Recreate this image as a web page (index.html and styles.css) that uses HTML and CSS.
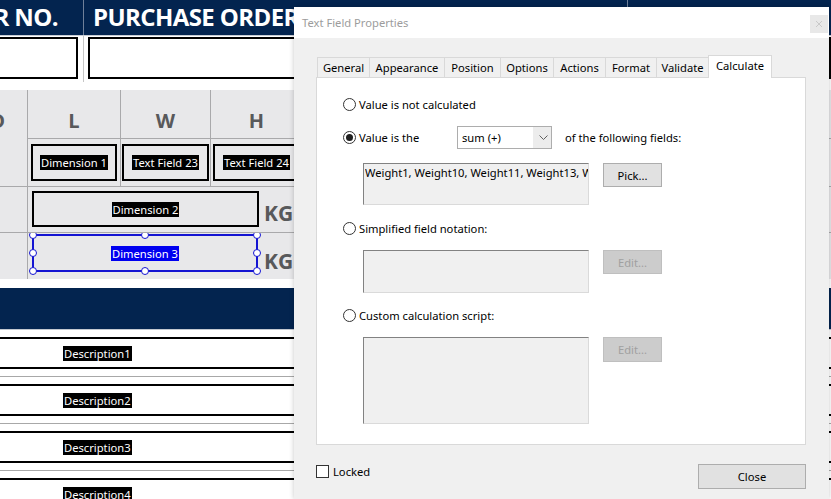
FILE: index.html
```html
<!DOCTYPE html>
<html>
<head>
<meta charset="utf-8">
<title>Text Field Properties</title>
<link rel="stylesheet" href="styles.css">
</head>
<body>
<div class="doc">
  <div class="hdr">
    <div class="hcell hc1"><span>ORDER NO.</span></div>
    <div class="hcell hc2"><span class="htxt">PURCHASE ORDER NO.</span></div>
    <div class="hcell hc3"><span>DATE</span></div>
  </div>
  <div class="inrow">
    <div class="icell ic1"><div class="ibox ib1"></div></div>
    <div class="icell ic2"><div class="ibox"></div></div>
    <div class="icell ic3"><div class="ibox"></div></div>
  </div>
  <div class="gap1"></div>
  <div class="grid">
    <div class="g hd c0"><span class="clipd">D</span></div>
    <div class="g hd">L</div>
    <div class="g hd">W</div>
    <div class="g hd">H</div>
    <div class="g"></div>
    <div class="g fc"><div class="fbox w86"><span class="flabel">Dimension 1</span></div></div>
    <div class="g fc"><div class="fbox w87"><span class="flabel">Text Field 23</span></div></div>
    <div class="g fc"><div class="fbox w87"><span class="flabel">Text Field 24</span></div></div>
    <div class="g"></div>
    <div class="g"></div>
    <div class="g span s2">
      <div class="fbox wide b2"><span class="flabel">Dimension 2</span></div>
      <span class="kg kg2">KG</span>
    </div>
    <div class="g"></div>
    <div class="g span s3">
      <div class="fbox wide sel">
        <span class="flabel blue">Dimension 3</span>
        <i class="hdl tl"></i><i class="hdl tc"></i><i class="hdl tr"></i>
        <i class="hdl ml"></i><i class="hdl mr"></i>
        <i class="hdl bl"></i><i class="hdl bc"></i><i class="hdl br"></i>
      </div>
      <span class="kg kg3">KG</span>
    </div>
  </div>
  <div class="gap2"></div>
  <div class="band"></div>
  <div class="drows">
    <div class="drow"><div class="dbox"><span class="flabel">Description1</span></div></div>
    <div class="drow"><div class="dbox"><span class="flabel">Description2</span></div></div>
    <div class="drow"><div class="dbox"><span class="flabel">Description3</span></div></div>
    <div class="drow"><div class="dbox"><span class="flabel">Description4</span></div></div>
  </div>
</div>

<div class="dlg">
  <div class="title">
    <span class="ttext">Text Field Properties</span>
    <span class="xbtn"><svg width="8" height="8" viewBox="0 0 8 8"><path d="M1 1L7 7M7 1L1 7" stroke="#c9c9c9" stroke-width="1"/></svg></span>
  </div>
  <div class="dbody">
    <div class="tabs">
      <span class="tab t1">General</span>
      <span class="tab t2">Appearance</span>
      <span class="tab t3">Position</span>
      <span class="tab t4">Options</span>
      <span class="tab t5">Actions</span>
      <span class="tab t6">Format</span>
      <span class="tab t7">Validate</span>
      <span class="tab act">Calculate</span>
    </div>
    <div class="panel">
      <div class="rrow">
        <span class="radio"></span><span class="rlabel">Value is not calculated</span>
      </div>
      <div class="rrow r2">
        <span class="radio on"></span><span class="rlabel fixed">Value is the</span>
        <span class="dd">
          <span class="ddf">sum (+)</span>
          <span class="dda"><svg width="9" height="5" viewBox="0 0 9 5"><path d="M0.5 0.5L4.5 4.5L8.5 0.5" fill="none" stroke="#606060" stroke-width="1"/></svg></span>
        </span>
        <span class="after">of the following fields:</span>
      </div>
      <div class="frow f1">
        <div class="farea a1"><span class="ftext">Weight1, Weight10, Weight11, Weight13, Weight14, Weight15</span></div>
        <span class="btn">Pick...</span>
      </div>
      <div class="rrow r3">
        <span class="radio"></span><span class="rlabel">Simplified field notation:</span>
      </div>
      <div class="frow f2">
        <div class="farea a2"></div>
        <span class="btn dis">Edit...</span>
      </div>
      <div class="rrow r4">
        <span class="radio"></span><span class="rlabel">Custom calculation script:</span>
      </div>
      <div class="frow f3">
        <div class="farea a3"></div>
        <span class="btn dis">Edit...</span>
      </div>
    </div>
    <div class="foot">
      <div class="lock"><span class="chk"></span><span class="llabel">Locked</span></div>
      <span class="cbtn">Close</span>
    </div>
  </div>
</div>
</body>
</html>
```
FILE: styles.css
```css
* { box-sizing: border-box; }
html, body { margin: 0; padding: 0; }
body {
  width: 831px;
  height: 499px;
  overflow: hidden;
  position: relative;
  background: #fff;
  font-family: "Noto Sans", sans-serif;
}
.doc { width: 831px; }

/* header band */
.hdr {
  display: flex;
  height: 36px;
  background: #03244f;
  border-bottom: 1px solid #c7ccd4;
}
.hcell {
  display: flex;
  overflow: hidden;
  white-space: nowrap;
  color: #fff;
  font-family: "Open Sans", sans-serif;
  font-weight: 700;
  font-size: 24px;
  line-height: 24px;
  letter-spacing: -0.6px;
  padding-top: 5px;
}
.hc1 { width: 84px; justify-content: flex-end; padding-right: 25px; border-right: 1px solid #6f8099; }
.hc2 { width: 544px; padding-left: 9px; border-right: 1px solid #6f8099; }
.hc3 { flex: 1; padding-left: 9px; }
.htxt { display: block; max-width: 201px; overflow: hidden; }

/* input row */
.inrow { display: flex; height: 46px; }
.icell { display: flex; padding-top: 1px; }
.ic1 { width: 84px; padding-right: 5px; border-right: 1px solid #c6c6c6; }
.ic2 { width: 544px; padding-left: 4px; padding-right: 5px; border-right: 1px solid #c6c6c6; }
.ic3 { flex: 1; padding-left: 4px; }
.ibox { flex: 1; height: 42px; border: 2px solid #000; background: #fff; }
.ib1 { margin-left: -10px; }
.gap1 { height: 8px; }

/* grey grid */
.grid {
  display: grid;
  grid-template-columns: 27px 92px 89px 91px 1fr;
  grid-template-rows: 48px 47px 45px 46px;
  gap: 1px;
  background: #a9a9ab;
  height: 189px;
}
.g { background: #e8e8ea; display: flex; overflow: hidden; }
.c0 { grid-row: 1 / 3; justify-content: flex-end; }
.hd {
  justify-content: center;
  align-items: flex-start;
  padding-top: 21px;
  font-family: "Open Sans", sans-serif;
  font-weight: 700;
  font-size: 20px;
  line-height: 20px;
  color: #58595b;
}
.c0.hd { justify-content: flex-end; }
.clipd { margin-right: 22px; }
.fc { align-items: center; justify-content: center; }
.fbox {
  height: 37px;
  border: 2px solid #000;
  display: flex;
  align-items: center;
  justify-content: center;
  position: relative;
}
.w86 { width: 86px; }
.w87 { width: 87px; }
.flabel {
  background: #000;
  color: #fff;
  font-family: "Noto Sans", sans-serif;
  font-size: 11.2px;
  line-height: 15px;
  padding: 0 1px;
  white-space: nowrap;
}
.flabel.blue { background: #0000f0; }
.span { grid-column: 2 / -1; padding-left: 4px; align-items: flex-start; }
.wide { width: 227px; }
.b2 { margin-top: 4px; height: 36px; }
.sel { margin-top: 1px; height: 38px; width: 226px; border-color: #1414d2; }
.kg {
  font-family: "Open Sans", sans-serif;
  font-weight: 700;
  font-size: 21px;
  line-height: 21px;
  color: #58595b;
}
.kg2 { margin-left: 5px; margin-top: 16px; }
.kg3 { margin-left: 6px; margin-top: 18px; }
.hdl {
  position: absolute;
  width: 8px;
  height: 8px;
  border-radius: 50%;
  background: #fff;
  border: 1.5px solid #1414d2;
}
.tl { left: -5px; top: -5px; }
.tc { left: calc(50% - 4px); top: -5px; }
.tr { right: -5px; top: -5px; }
.ml { left: -5px; top: calc(50% - 4px); }
.mr { right: -5px; top: calc(50% - 4px); }
.bl { left: -5px; bottom: -5px; }
.bc { left: calc(50% - 4px); bottom: -5px; }
.br { right: -5px; bottom: -5px; }

.gap2 { height: 9px; }
.band { height: 42px; background: #03244f; border-bottom: 1px solid #c3c8d0; }
.drow { padding: 7px 0; border-bottom: 1px solid #a8a8a8; }
.dbox {
  height: 32px;
  border-top: 2px solid #000;
  border-bottom: 2px solid #000;
  display: flex;
  align-items: center;
  padding-left: 63px;
}

/* dialog */
.dlg {
  position: absolute;
  left: 294px;
  top: 7px;
  width: 535px;
  height: 492px;
  background: #f0f0f0;
  box-shadow: 0 0 5px rgba(0, 0, 0, 0.22);
  display: flex;
  flex-direction: column;
  font-family: "Noto Sans", sans-serif;
  font-size: 11.2px;
  color: #000;
}
.title {
  height: 31px;
  background: #fff;
  display: flex;
  align-items: flex-start;
  padding-left: 8px;
}
.ttext { color: #9c9c9c; margin-top: 8px; line-height: 16px; }
.xbtn {
  margin-left: auto;
  margin-top: 8px;
  margin-right: 1px;
  width: 18px;
  height: 18px;
  background: #e8e8e8;
  display: flex;
  align-items: center;
  justify-content: center;
}
.dbody {
  flex: 1;
  padding: 17px 23px 0 22px;
  display: flex;
  flex-direction: column;
}
.tabs {
  display: flex;
  align-items: flex-end;
  height: 22px;
  padding-left: 1px;
  position: relative;
  z-index: 1;
}
.tab {
  height: 20px;
  border-top: 1px solid #d9d9d9;
  border-left: 1px solid #d9d9d9;
  background: #f0f0f0;
  display: flex;
  align-items: center;
  justify-content: center;
  line-height: 16px;
  padding-top: 1px;
}
.t1 { width: 52px; }
.t2 { width: 75px; }
.t3 { width: 56px; }
.t4 { width: 53px; }
.t5 { width: 52px; }
.t6 { width: 51px; }
.t7 { width: 52px; }
.tab.act {
  width: 64px;
  height: 23px;
  margin-bottom: -1px;
  background: #fff;
  border-right: 1px solid #d9d9d9;
  align-items: flex-start;
  padding-top: 2px;
}
.panel {
  height: 368px;
  width: 490px;
  background: #fff;
  border: 1px solid #d9d9d9;
  padding: 16px 0 0 26px;
  display: flex;
  flex-direction: column;
}
.rrow { display: flex; align-items: center; height: 20px; }
.r2 { margin-top: 12px; height: 23px; }
.r3 { margin-top: 13px; }
.r4 { margin-top: 12px; }
.radio {
  width: 13px;
  height: 13px;
  border: 1px solid #333;
  border-radius: 50%;
  background: #fff;
  display: flex;
  align-items: center;
  justify-content: center;
  flex: none;
}
.radio.on::after {
  content: "";
  width: 7px;
  height: 7px;
  border-radius: 50%;
  background: #1f1f1f;
}
.rlabel { margin-left: 3px; white-space: nowrap; }
.rlabel.fixed { width: 98px; }
.dd {
  width: 95px;
  height: 23px;
  border: 1px solid #adadad;
  background: #ececec;
  display: flex;
}
.ddf {
  width: 75px;
  background: #fff;
  padding-left: 4px;
  display: flex;
  align-items: center;
}
.dda { flex: 1; display: flex; align-items: center; justify-content: center; padding-left: 2px; }
.after { margin-left: 13px; white-space: nowrap; }
.frow { display: flex; align-items: flex-start; margin-left: 20px; }
.f1 { margin-top: 14px; }
.f2 { margin-top: 12px; }
.f3 { margin-top: 12px; }
.farea {
  width: 226px;
  background: #f0f0f0;
  border: 1px solid;
  border-color: #828282 #dadada #dadada #828282;
  overflow: hidden;
  white-space: nowrap;
  padding: 1px 0 0 1px;
  flex: none;
}
.ftext { display: block; width: 100%; overflow: hidden; }
.a1 { height: 42px; }
.a2 { height: 43px; }
.a3 { height: 87px; }
.btn {
  margin-left: 14px;
  width: 59px;
  height: 24px;
  background: #e1e1e1;
  border: 1px solid #adadad;
  display: flex;
  align-items: center;
  justify-content: center;
}
.btn.dis {
  background: #cccccc;
  border-color: #bfbfbf;
  color: #a0a0a0;
}
.f3 .btn { height: 25px; }
.foot {
  display: flex;
  justify-content: space-between;
  align-items: flex-start;
  margin-top: 19px;
}
.lock { display: flex; align-items: center; margin-top: 1px; }
.chk {
  width: 13px;
  height: 13px;
  border: 1px solid #333;
  background: #fff;
}
.llabel { margin-left: 4px; line-height: 13px; }
.cbtn {
  width: 108px;
  height: 25px;
  background: #e1e1e1;
  border: 1px solid #adadad;
  display: flex;
  align-items: center;
  justify-content: center;
}
```
